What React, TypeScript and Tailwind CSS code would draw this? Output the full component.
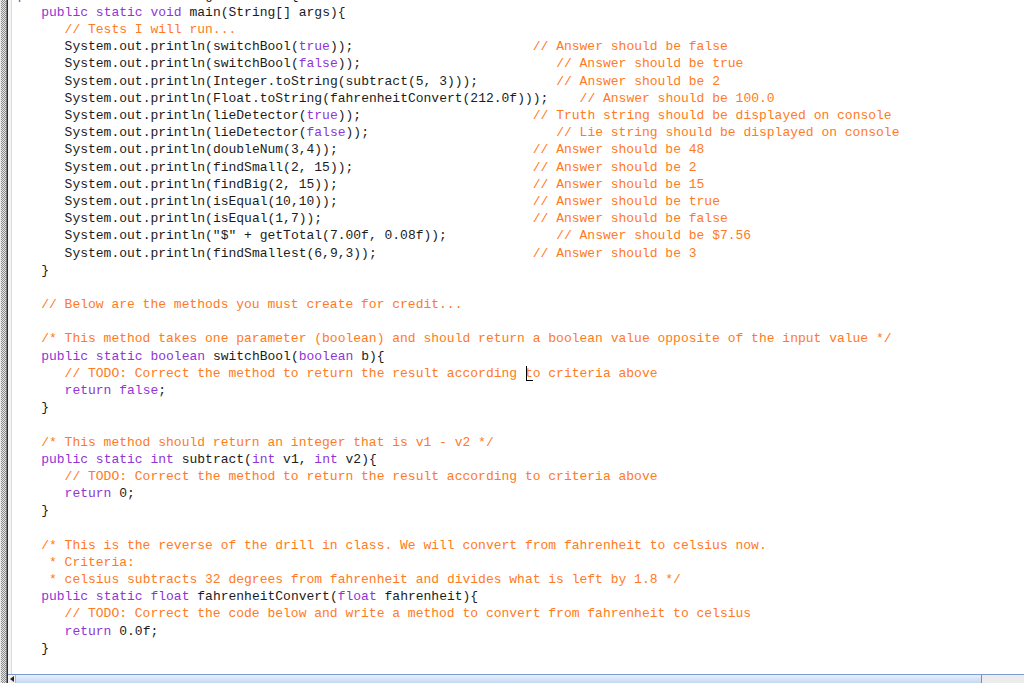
import React from "react";

const KW = new Set(["public", "static", "void", "boolean", "int", "float", "return", "true", "false", "class"]);

function pad(code: string, col: number, comment: string): string {
  const n = Math.max(1, col - code.length);
  return code + " ".repeat(n) + comment;
}

const I2 = "      ";
const L: string[] = [
  "public class MethodsAssignmentLab1 {",
  "   public static void main(String[] args){",
  "      // Tests I will run...",
  pad(I2 + "System.out.println(switchBool(true));", 66, "// Answer should be false"),
  pad(I2 + "System.out.println(switchBool(false));", 69, "// Answer should be true"),
  pad(I2 + "System.out.println(Integer.toString(subtract(5, 3)));", 69, "// Answer should be 2"),
  pad(I2 + "System.out.println(Float.toString(fahrenheitConvert(212.0f)));", 72, "// Answer should be 100.0"),
  pad(I2 + "System.out.println(lieDetector(true));", 66, "// Truth string should be displayed on console"),
  pad(I2 + "System.out.println(lieDetector(false));", 69, "// Lie string should be displayed on console"),
  pad(I2 + "System.out.println(doubleNum(3,4));", 66, "// Answer should be 48"),
  pad(I2 + "System.out.println(findSmall(2, 15));", 66, "// Answer should be 2"),
  pad(I2 + "System.out.println(findBig(2, 15));", 66, "// Answer should be 15"),
  pad(I2 + "System.out.println(isEqual(10,10));", 66, "// Answer should be true"),
  pad(I2 + "System.out.println(isEqual(1,7));", 66, "// Answer should be false"),
  pad(I2 + 'System.out.println("$" + getTotal(7.00f, 0.08f));', 69, "// Answer should be $7.56"),
  pad(I2 + "System.out.println(findSmallest(6,9,3));", 66, "// Answer should be 3"),
  "   }",
  "",
  "   // Below are the methods you must create for credit...",
  "",
  "   /* This method takes one parameter (boolean) and should return a boolean value opposite of the input value */",
  "   public static boolean switchBool(boolean b){",
  "      // TODO: Correct the method to return the result according to criteria above",
  "      return false;",
  "   }",
  "",
  "   /* This method should return an integer that is v1 - v2 */",
  "   public static int subtract(int v1, int v2){",
  "      // TODO: Correct the method to return the result according to criteria above",
  "      return 0;",
  "   }",
  "",
  "   /* This is the reverse of the drill in class. We will convert from fahrenheit to celsius now.",
  "    * Criteria:",
  "    * celsius subtracts 32 degrees from fahrenheit and divides what is left by 1.8 */",
  "   public static float fahrenheitConvert(float fahrenheit){",
  "      // TODO: Correct the code below and write a method to convert from fahrenheit to celsius",
  "      return 0.0f;",
  "   }",
  "",
];

function Code({ text }: { text: string }) {
  const parts = text.split(/(\b[A-Za-z_]+\b)/);
  return (
    <>
      {parts.map((p, i) =>
        KW.has(p) ? (
          <span key={i} className="text-[#8f35d5]">
            {p}
          </span>
        ) : (
          <span key={i}>{p}</span>
        )
      )}
    </>
  );
}

function Line({ text, idx }: { text: string; idx: number }) {
  const trimmed = text.trimStart();
  let code = text;
  let comment = "";
  if (trimmed.startsWith("/*") || trimmed.startsWith("*")) {
    const lead = text.length - trimmed.length;
    code = text.slice(0, lead);
    comment = trimmed;
  } else {
    const ci = text.indexOf("//");
    if (ci >= 0) {
      code = text.slice(0, ci);
      comment = text.slice(ci);
    }
  }
  if (idx === 22) {
    const cut = 65 - code.length;
    return (
      <div className="h-[17.2px] whitespace-pre">
        <Code text={code} />
        <span className="text-[#ff7a22]">{comment.slice(0, cut)}</span>
        <span className="relative inline-block w-0 h-[17.2px] align-top">
          <span className="absolute left-[1px] top-[1px] w-[1px] h-[15px] bg-black" />
          <span className="absolute left-[1px] top-[15px] w-[7px] h-[1px] bg-black" />
        </span>
        <span className="text-[#ff7a22]">{comment.slice(cut)}</span>
      </div>
    );
  }
  return (
    <div className="h-[17.2px] whitespace-pre">
      <Code text={code} />
      {comment && <span className="text-[#ff7a22]">{comment}</span>}
    </div>
  );
}

export default function App() {
  return (
    <div className="w-[1024px] h-[683px] flex overflow-hidden bg-white">
      {/* left gutter */}
      <div className="w-[8px] h-full flex shrink-0">
        <div className="w-[1px] h-full bg-[#e6e6e6]" />
        <div className="w-[5px] h-full bg-[image:repeating-conic-gradient(#8c8c8c_0_25%,#e4e4e4_0_50%)] bg-[length:2px_2px]" />
        <div className="w-[1px] h-full bg-[#7a7a7a]" />
        <div className="w-[1px] h-full bg-[#2e2e2e]" />
      </div>
      <div className="flex-1 flex flex-col min-w-0">
        <div className="flex-1 flex min-h-0 overflow-hidden">
          <div className="w-[4px] h-full bg-[#f4f4f4] border-r border-[#dcdcdc] shrink-0" />
          <div
            className="flex-1 pl-[5.8px] mt-[-13.3px] text-[13px] leading-[17.2px] text-[#1b1b1b] overflow-hidden"
            style={{ fontFamily: '"Liberation Mono", "DejaVu Sans Mono", monospace' }}
          >
            {L.map((t, i) => (
              <Line key={i} text={t} idx={i} />
            ))}
          </div>
        </div>
        {/* horizontal scrollbar */}
        <div className="h-[9px] flex shrink-0 border-t border-[#7e9bd0]">
          <div className="w-[8px] h-full bg-[#f2f2f2] border-r border-[#b8b8b8] flex items-center justify-center">
            <div className="w-0 h-0 border-y-[3px] border-y-transparent border-r-[4px] border-r-[#222]" />
          </div>
          <div className="w-[966px] h-full bg-linear-to-b from-[#e8f0fb] to-[#c5d8f2] border-r border-[#6f8fcb]" />
          <div className="flex-1 h-full bg-[#ececec]" />
        </div>
      </div>
    </div>
  );
}
